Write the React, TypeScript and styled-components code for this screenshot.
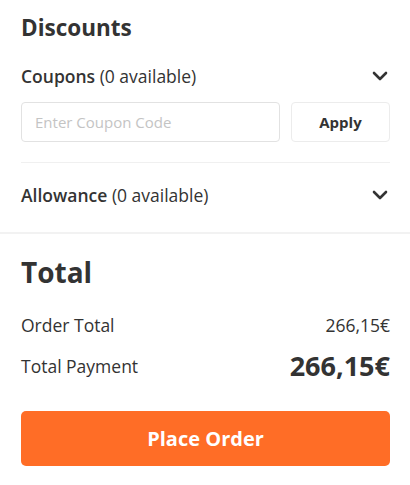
import React from "react";
import styled, { createGlobalStyle } from "styled-components";

const Global = createGlobalStyle`
  html, body { margin: 0; padding: 0; background: #fff; }
  body { font-family: "Open Sans", "Noto Sans", sans-serif; color: #333; }
  * { box-sizing: border-box; }
`;

const Page = styled.div`
  width: 410px;
  display: flex;
  flex-direction: column;
`;

const Section = styled.section<{ $top: number; $bottom: number; $divider?: boolean }>`
  padding: ${(p) => p.$top}px 20px ${(p) => p.$bottom}px 21px;
  border-bottom: ${(p) => (p.$divider ? "2px solid #f2f2f2" : "none")};
  display: flex;
  flex-direction: column;
`;

const Title = styled.h2<{ $size: number; $lh: number }>`
  margin: 0;
  font-size: ${(p) => p.$size}px;
  line-height: ${(p) => p.$lh}px;
  font-weight: 700;
  color: #333;
`;

const Accordion = styled.div<{ $mt: number }>`
  margin-top: ${(p) => p.$mt}px;
  display: flex;
  align-items: center;
  justify-content: space-between;
  height: 24px;
  font-size: 17.5px;
  line-height: 24px;
`;

const Label = styled.span`
  font-weight: 600;
  color: #333;
`;

const Muted = styled.span`
  font-weight: 400;
  color: #333;
`;

const Chevron = styled.svg`
  width: 16px;
  height: 10px;
  margin-right: 2px;
`;

const CouponRow = styled.div`
  margin-top: 14px;
  display: flex;
  gap: 11px;
`;

const Input = styled.input`
  flex: 1;
  height: 40px;
  border: 1px solid #e2e2e2;
  border-radius: 4px;
  padding: 0 13px;
  font-family: "Open Sans", sans-serif;
  font-size: 15px;
  color: #333;
  outline: none;
  &::placeholder { color: #c4c4c4; }
`;

const ApplyButton = styled.button`
  width: 99px;
  height: 40px;
  border: 1px solid #ececec;
  border-radius: 4px;
  background: #fff;
  font-family: "Open Sans", sans-serif;
  font-weight: 700;
  font-size: 15px;
  color: #333;
`;

const Divider = styled.hr`
  margin: 20px 0 0;
  border: none;
  border-top: 1px solid #f0f0f0;
`;

const SummaryRow = styled.div<{ $mt: number }>`
  margin-top: ${(p) => p.$mt}px;
  display: flex;
  justify-content: space-between;
  align-items: center;
  font-size: 17.5px;
  line-height: 24px;
`;

const BigValue = styled.span`
  font-size: 27px;
  line-height: 36px;
  font-weight: 700;
  color: #333;
`;

const PlaceOrder = styled.button`
  margin-top: 27px;
  height: 55px;
  border: none;
  border-radius: 5px;
  background: #ff6d26;
  color: #fff;
  font-family: "Open Sans", sans-serif;
  font-weight: 700;
  font-size: 20px;
`;

const ChevronIcon = () => (
  <Chevron viewBox="0 0 16 10" fill="none">
    <path d="M2 2 L8 8 L14 2" stroke="#333" strokeWidth="2.6" strokeLinecap="round" strokeLinejoin="round" />
  </Chevron>
);

export default function App() {
  return (
    <Page>
      <Global />
      <Section $top={13} $bottom={25} $divider>
        <Title $size={22.5} $lh={30}>Discounts</Title>
        <Accordion $mt={21}>
          <span>
            <Label>Coupons</Label> <Muted>(0 available)</Muted>
          </span>
          <ChevronIcon />
        </Accordion>
        <CouponRow>
          <Input placeholder="Enter Coupon Code" />
          <ApplyButton>Apply</ApplyButton>
        </CouponRow>
        <Divider />
        <Accordion $mt={20}>
          <span>
            <Label>Allowance</Label> <Muted>(0 available)</Muted>
          </span>
          <ChevronIcon />
        </Accordion>
      </Section>
      <Section $top={20} $bottom={18}>
        <Title $size={28} $lh={36}>Total</Title>
        <SummaryRow $mt={23}>
          <Muted>Order Total</Muted>
          <Muted>266,15€</Muted>
        </SummaryRow>
        <SummaryRow $mt={11}>
          <Muted>Total Payment</Muted>
          <BigValue>266,15€</BigValue>
        </SummaryRow>
        <PlaceOrder>Place Order</PlaceOrder>
      </Section>
    </Page>
  );
}
